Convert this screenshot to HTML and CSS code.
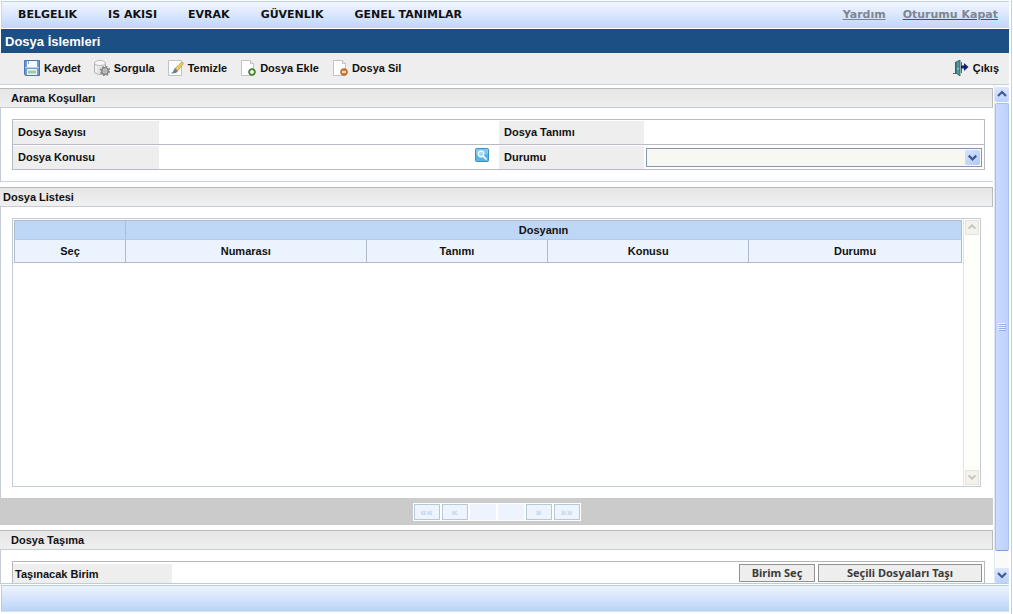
FILE: index.html
```html
<!DOCTYPE html>
<html lang="tr">
<head>
<meta charset="utf-8">
<title>Dosya İslemleri</title>
<link rel="stylesheet" href="styles.css">
</head>
<body>
<div class="app">
  <header class="menubar">
    <nav class="menu">
      <a href="#">BELGELIK</a>
      <a href="#">IS AKISI</a>
      <a href="#">EVRAK</a>
      <a href="#">GÜVENLIK</a>
      <a href="#">GENEL TANIMLAR</a>
    </nav>
    <nav class="session">
      <a href="#">Yardım</a>
      <a href="#" class="visited">Oturumu Kapat</a>
    </nav>
  </header>
  <h1 class="title">Dosya İslemleri</h1>
  <div class="toolbar">
    <button class="tool" type="button">
      <svg class="icon" viewBox="0 0 16 16"><path d="M.5.5h15v15h-14l-1-1z" fill="#6f9ad6" stroke="#4a76b6"/><path d="M3 1h10v6H3z" fill="#f4f9ff"/><path d="M4 1h1v3H4z" fill="#8aa5ca"/><path d="M1 7.500h14" stroke="#b9d3f5"/><path d="M3 9h10v6H3z" fill="#edf5ec"/><path d="M4 10.500h8v3H4z" fill="#9fcbab"/></svg>
      Kaydet</button>
    <button class="tool" type="button">
      <svg class="icon" viewBox="0 0 16 16"><path d="M.5 3v9c0 1.500 3 2.500 6 2.500s5-1 5-2.500V3z" fill="#e4e4e4" stroke="#b1b1b1"/><ellipse cx="6" cy="3" rx="5.500" ry="2.500" fill="#f8f8f8" stroke="#bbb"/><path d="M2 6v6" stroke="#fff"/><circle cx="11" cy="11" r="3.200" fill="#ddd" stroke="#888" stroke-width="1.600"/><circle cx="11" cy="11" r="4.500" fill="none" stroke="#888" stroke-width="1.500" stroke-dasharray="1.800 1.730"/><circle cx="11" cy="11" r="1.200" fill="#fff" stroke="#777" stroke-width=".8"/></svg>
      Sorgula</button>
    <button class="tool" type="button">
      <svg class="icon" viewBox="0 0 16 16"><path d="M.5.5h13v15H.5z" fill="#fdfdfd" stroke="#bcc3cb"/><path d="M7 8.500L14 2l1.500 1.500L9.500 11z" fill="#f0cf60" stroke="#b68f38" stroke-width=".7"/><path d="M7 8L10 11 8 13 3 13.500l2-2z" fill="#6e7f8c"/></svg>
      Temizle</button>
    <button class="tool" type="button">
      <svg class="icon" viewBox="0 0 16 16"><path d="M1.500.500h9l3 3v12h-12z" fill="#fff" stroke="#c3c3c3"/><path d="M10.500.500v3h3" fill="#eee" stroke="#c3c3c3"/><circle cx="12" cy="12" r="3.300" fill="#5fa541" stroke="#356f26"/><path d="M12 10v4M10 12h4" stroke="#fff" stroke-width="1.400"/></svg>
      Dosya Ekle</button>
    <button class="tool" type="button">
      <svg class="icon" viewBox="0 0 16 16"><path d="M1.500.500h9l3 3v12h-12z" fill="#fff" stroke="#c3c3c3"/><path d="M10.500.500v3h3" fill="#eee" stroke="#c3c3c3"/><circle cx="12" cy="12" r="3.300" fill="#dc8134" stroke="#ad5a20"/><path d="M10 12h4" stroke="#fff" stroke-width="1.400"/></svg>
      Dosya Sil</button>
    <button class="tool exit" type="button">
      <svg class="icon" viewBox="0 0 16 16"><path d="M0 13.500h3M2.500 2v11M8.500 2v11" stroke="#4d6670" fill="none"/><path d="M3 2l4-2v16l-4-3z" fill="#56979b" stroke="#225562" stroke-width=".8"/><path d="M5 8v1.500" stroke="#d4f0ee"/><path d="M8 5.500h3V3l4.500 4L11 11V8.500H8z" fill="#16206c"/></svg>
      Çıkış</button>
  </div>

  <div class="workspace">
    <main class="content">
      <section class="panel search">
        <h2 class="heading indented">Arama Koşulları</h2>
        <form class="criteria">
          <div class="row">
            <label class="label" for="sayi">Dosya Sayısı</label>
            <div class="value"><input class="plain" id="sayi" type="text"></div>
            <label class="label" for="tanim">Dosya Tanımı</label>
            <div class="value"><input class="plain" id="tanim" type="text"></div>
          </div>
          <div class="row">
            <label class="label" for="konu">Dosya Konusu</label>
            <div class="value"><input class="plain" id="konu" type="text">
              <button class="lookup" type="button" aria-label="Ara"><svg viewBox="0 0 14 14"><rect x=".5" y=".5" width="13" height="13" rx="1" fill="#5cb6e3" stroke="#3e8fbf"/><path d="M1 1h12v5H1z" fill="#83cbed"/><circle cx="6" cy="6" r="2.800" fill="#a5daf2" stroke="#fff" stroke-width="1.200"/><path d="M8 8l3.500 3.500" stroke="#fff" stroke-width="1.600"/></svg></button>
            </div>
            <label class="label" for="durum">Durumu</label>
            <div class="value">
              <div class="combo">
                <select id="durum"><option></option></select>
                <span class="combo-arrow"><svg viewBox="0 0 16 16"><path d="M4 6l4 4 4-4" fill="none" stroke="#3f5c92" stroke-width="2.400"/></svg></span>
              </div>
            </div>
          </div>
        </form>
      </section>

      <section class="panel list">
        <h2 class="heading">Dosya Listesi</h2>
        <div class="listbox">
          <div class="tablewrap">
            <table class="files">
              <colgroup><col class="c-sec"><col class="c-num"><col class="c-tan"><col class="c-kon"><col class="c-dur"></colgroup>
              <thead>
                <tr class="group"><th></th><th colspan="4">Dosyanın</th></tr>
                <tr class="cols"><th>Seç</th><th>Numarası</th><th>Tanımı</th><th>Konusu</th><th>Durumu</th></tr>
              </thead>
            </table>
          </div>
          <div class="innerbar">
            <span class="innerbtn"><svg viewBox="0 0 14 14"><path d="M3 9l4-4 4 4" fill="none" stroke="#c4c2b8" stroke-width="2"/></svg></span>
            <span class="innerbtn"><svg viewBox="0 0 14 14"><path d="M3 5l4 4 4-4" fill="none" stroke="#c4c2b8" stroke-width="2"/></svg></span>
          </div>
        </div>
      </section>

      <div class="pagerbar">
        <div class="pager">
          <button type="button" disabled>««</button>
          <button type="button" disabled>«</button>
          <span></span>
          <span></span>
          <button type="button" disabled>»</button>
          <button type="button" disabled>»»</button>
        </div>
      </div>

      <section class="panel last">
        <h2 class="heading indented">Dosya Taşıma</h2>
        <div class="move">
          <span class="movelabel">Taşınacak Birim</span>
          <button class="action" type="button">Birim Seç</button>
          <button class="action wide" type="button">Seçili Dosyaları Taşı</button>
        </div>
      </section>
    </main>
    <div class="scrollbar">
      <span class="sbtn"><svg viewBox="0 0 14 14"><path d="M3 9l4-4 4 4" fill="none" stroke="#3f5c92" stroke-width="2.200"/></svg></span>
      <span class="thumb"><svg class="grip" viewBox="0 0 8 8"><path d="M0 .5h7M0 2.500h7M0 4.500h7M0 6.500h7" stroke="#eef4fe"/><path d="M1 1.500h7M1 3.500h7M1 5.500h7M1 7.500h7" stroke="#8cb0f8"/></svg></span>
      <span class="sbtn"><svg viewBox="0 0 14 14"><path d="M3 5l4 4 4-4" fill="none" stroke="#3f5c92" stroke-width="2.200"/></svg></span>
    </div>
  </div>
  <footer class="footer"></footer>
</div>
</body>
</html>
```
FILE: styles.css
```css
* { box-sizing: border-box; }
body {
  margin: 0;
  background: #fff;
  color: #111;
  font: bold 11px/14px "Liberation Sans", Arial, sans-serif;
}
button, input, select { font: inherit; color: inherit; margin: 0; }
button { cursor: pointer; }
svg { display: block; }

.app {
  display: flex;
  flex-direction: column;
  height: 100vh;
  min-height: 480px;
  margin-right: 1px;
  padding: 1px 2px 2px 0;
  border-right: 1px solid #b9d5e6;
}

/* top menu */
.menubar {
  display: flex;
  justify-content: space-between;
  align-items: center;
  height: 27px;
  margin-left: 1px;
  padding: 0 11px 0 16px;
  border-top: 1px solid #bcd3de;
  border-left: 1px solid #c5d8ee;
  background: linear-gradient(#f2f6ff, #dce8ff 45%, #bdd6f8);
  font-family: "DejaVu Sans", Verdana, sans-serif;
}
.menu { display: flex; gap: 31px; }
.menu a { color: #111; text-decoration: none; }
.session { display: flex; gap: 17px; }
.session a { color: #7f858f; }
.session .visited { text-decoration-color: #8a2a92; }

.title {
  height: 24px;
  margin: 1px 0 0 1px;
  padding: 0 4px;
  background: #1c5084;
  color: #fff;
  font-size: 13px;
  line-height: 25px;
}

.toolbar {
  display: flex;
  align-items: center;
  gap: 13px;
  height: 32px;
  padding: 0 10px 2px 24px;
  border-bottom: 1px solid #c3d5dc;
  background: #eee;
}
.tool {
  display: flex;
  align-items: center;
  gap: 4px;
  padding: 0;
  border: 0;
  background: none;
}
.icon { width: 16px; height: 16px; }
.exit { margin-left: auto; }

/* scrolled area */
.workspace {
  display: flex;
  flex: 1;
  min-height: 0;
  gap: 1px;
  border-bottom: 1px solid #b5d0da;
}
.content {
  display: flex;
  flex: 1;
  flex-direction: column;
  min-width: 0;
  padding-top: 3px;
}
.panel { border-left: 1px solid #c5cbd8; }
.heading {
  height: 20px;
  margin: 0 0 0 -1px;
  padding: 0 3px;
  border: 1px solid #b9b9b9;
  border-bottom-color: #c3ccd8;
  border-left: 0;
  background: linear-gradient(#e6e6e6, #efefef);
  font-size: 11px;
  line-height: 19px;
}
.indented { padding-left: 11px; }

.search { padding-bottom: 11px; border-bottom: 1px solid #c3d5dc; }
.criteria { margin: 11px 8px 0 11px; border: 1px solid #b7bbc3; }
.row {
  display: grid;
  grid-template-columns: 147fr 339fr 146fr 339fr;
  height: 24px;
}
.row + .row { height: 25px; border-top: 1px solid #b7bbc3; }
.label {
  margin: 1px 1px 1px 0;
  padding-left: 5px;
  background: #eee;
  line-height: 23px;
}
.value { display: flex; align-items: center; min-width: 0; padding: 0 2px 0 1px; }
.plain { flex: 1; min-width: 0; height: 20px; border: 0; background: #fff; }
.lookup { width: 14px; height: 14px; margin: 0 8px 6px 0; padding: 0; border: 0; background: none; }
.combo { position: relative; flex: 1; height: 19px; }
.combo select {
  display: block;
  width: 100%;
  height: 100%;
  border: 1px solid #8697ad;
  border-radius: 0;
  background: #f8f8f2;
  appearance: none;
}
.combo-arrow {
  position: absolute;
  top: 2px;
  right: 2px;
  width: 15px;
  height: 15px;
  border-radius: 2px;
  background: linear-gradient(135deg, #d7e4ff, #afc9fa);
  pointer-events: none;
}

.list { display: flex; flex: 1; flex-direction: column; min-height: 150px; margin-top: 5px; }
.listbox {
  display: flex;
  flex: 1;
  margin: 11px 12px 11px 11px;
  border: 1px solid #c3cbd6;
}
.tablewrap { flex: 1; padding: 1px 0 0 1px; }
.files { width: 100%; border-collapse: collapse; table-layout: fixed; }
.files th { padding: 0; border: 1px solid #aebccd; text-align: center; }
.c-sec { width: 111px; }
.c-num { width: 25.4%; }
.c-tan { width: 19.2%; }
.c-kon { width: 21.2%; }
.files .group th { height: 19px; background: #bfd7f7; border-bottom-color: #b4cbe8; }
.files .cols th { height: 23px; background: #ebf4fe; }
.innerbar {
  display: flex;
  flex-direction: column;
  justify-content: space-between;
  width: 17px;
  padding: 1px;
  border-left: 1px solid #e5e5df;
  margin-left: 1px;
  background: #fefefa;
}
.innerbtn {
  width: 14px;
  height: 15px;
  border: 1px solid #e5e3d9;
  background: #f3f2ec;
}

.pagerbar {
  display: flex;
  align-items: center;
  justify-content: center;
  height: 27px;
  background: #cbcbcb;
}
.pager { display: flex; gap: 2px; padding: 1px; background: #fff; }
.pager button, .pager span {
  width: 26px;
  height: 16px;
  padding: 0;
  background: #edf4fe;
  color: #c3d5ea;
  line-height: 14px;
}
.pager button { border: 1px solid #b5c9d7; }

.last { margin-top: 5px; }
.move {
  display: flex;
  align-items: flex-start;
  gap: 3px;
  height: 22px;
  margin: 11px 8px 0 11px;
  padding: 2px 2px 0 0;
  border: 1px solid #b7b7b7;
  border-bottom: 0;
}
.movelabel {
  width: 159px;
  height: 19px;
  margin-right: auto;
  padding-left: 2px;
  background: #eee;
  line-height: 21px;
}
.action {
  width: 76px;
  height: 18px;
  padding: 0;
  border: 1px solid #929292;
  background: #eee;
  color: #3b3b3b;
  font-family: "Noto Sans", Tahoma, sans-serif;
  line-height: 14px;
}
.wide { width: 164px; }

.scrollbar {
  display: flex;
  flex-direction: column;
  gap: 1px;
  width: 15px;
  padding: 2px 0 0;
  border-left: 1px solid #dfe9f2;
  background: #fafaf8;
}
.sbtn {
  height: 15px;
  border-radius: 2px;
  background: linear-gradient(#dce7ff, #bcd1fb);
}
.sbtn svg { height: 14px; width: 14px; }
.thumb {
  display: flex;
  flex: 1;
  align-items: center;
  justify-content: center;
  margin-bottom: 16px;
  border: 1px solid #a6bff3;
  border-bottom-color: #7c9edc;
  border-radius: 2px;
  background: linear-gradient(90deg, #cbdbff, #bed1fd);
}
.grip { width: 8px; height: 8px; }

.footer {
  height: 27px;
  margin: 1px 0 0 1px;
  border: 1px solid #b5cfdc;
  border-right: 0;
  border-bottom-color: #cfe0ee;
  background: linear-gradient(#eef3fd, #d5e4fc 50%, #b9d4f6);
}
```
